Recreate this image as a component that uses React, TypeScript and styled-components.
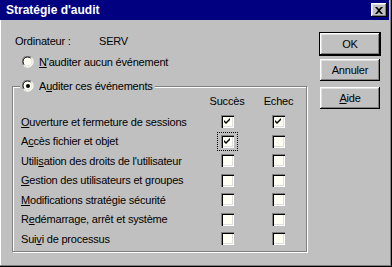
import { FC, Fragment } from "react";
import styled, { createGlobalStyle } from "styled-components";

const GlobalStyle = createGlobalStyle`
  html, body {
    margin: 0;
    padding: 0;
    background: #c0c0c0;
  }
  * {
    box-sizing: border-box;
  }
`;

const Window = styled.div`
  width: 392px;
  height: 267px;
  background-color: #c0c0c0;
  box-shadow: inset -1px -1px 0 #000, inset -2px -2px 0 #808080,
    inset 1px 0 0 #fff;
  font-family: "Liberation Sans", Arial, sans-serif;
  font-size: 11px;
  letter-spacing: -0.2px;
  color: #000;
  overflow: hidden;
`;

const TitleBar = styled.div`
  display: flex;
  align-items: center;
  justify-content: space-between;
  width: 389px;
  height: 20px;
  padding: 0 2px 0 6px;
  background-color: #000080;
  color: #fff;
`;

const Title = styled.span`
  font-weight: bold;
  font-size: 12px;
  letter-spacing: 0;
`;

const CloseButton = styled.div`
  display: flex;
  align-items: center;
  justify-content: center;
  width: 16px;
  height: 14px;
  background-color: #c0c0c0;
  box-shadow: inset -1px -1px 0 #000, inset 1px 1px 0 #fff,
    inset -2px -2px 0 #808080, inset 2px 2px 0 #dfdfdf;
`;

const Body = styled.div`
  display: flex;
`;

const LeftColumn = styled.div`
  display: flex;
  flex-direction: column;
  width: 295px;
  margin-left: 12px;
  padding-top: 13px;
`;

const InfoRow = styled.div`
  display: flex;
  height: 16px;
  line-height: 16px;
  padding-left: 3px;
`;

const InfoLabel = styled.span`
  width: 84px;
`;

const RadioRow = styled.div<{ $top?: number }>`
  display: flex;
  align-items: center;
  gap: 5px;
  height: 16px;
  margin-top: ${(p) => p.$top ?? 0}px;
  padding-left: ${(p) => (p.$top ? 10 : 0)}px;
`;

const Group = styled.div`
  position: relative;
  margin-top: 16px;
  border: 1px solid #808080;
  box-shadow: inset 1px 1px 0 #fff, 1px 1px 0 #fff;
  padding: 4px 1px 2px 8px;
`;

const Legend = styled.div`
  position: absolute;
  top: -9px;
  left: 7px;
  padding: 0 2px;
  background-color: #c0c0c0;
`;

const Grid = styled.div`
  display: grid;
  grid-template-columns: 181px 50px 53px;
  grid-template-rows: 21px repeat(7, 19.5px);
  align-items: center;
`;

const Header = styled.div`
  align-self: start;
  line-height: 20px;
  text-align: center;
`;

const Label = styled.div`
  line-height: 16px;
  white-space: nowrap;
`;

const Cell = styled.div`
  display: flex;
  justify-content: center;
  align-items: center;
`;

const Focus = styled.div<{ $focused?: boolean }>`
  display: flex;
  padding: 2px 3px;
  border: 1px dotted ${(p) => (p.$focused ? "#000" : "transparent")};
`;

const Box = styled.div`
  width: 13px;
  height: 13px;
  background-color: #fffff4;
  box-shadow: inset 1px 1px 0 #808080, inset 2px 2px 0 #000,
    inset -1px -1px 0 #fff, inset -2px -2px 0 #dfdfdf;
`;

const RightColumn = styled.div`
  display: flex;
  flex-direction: column;
  width: 62px;
  margin-left: 12px;
  padding-top: 12px;
`;

const DefaultFrame = styled.div`
  border: 1px solid #000;
  height: 24px;
`;

const Button = styled.div<{ $top?: number }>`
  display: flex;
  align-items: center;
  justify-content: center;
  width: 60px;
  height: 22px;
  margin: ${(p) => p.$top ?? 0}px 0 0 ${(p) => (p.$top ? 1 : 0)}px;
  background-color: #c0c0c0;
  box-shadow: inset -1px -1px 0 #000, inset 1px 1px 0 #fff,
    inset -2px -2px 0 #808080, inset 2px 2px 0 #dfdfdf;
`;

const Radio: FC<{ checked?: boolean }> = ({ checked }) => (
  <svg width="12" height="12" viewBox="0 0 12 12">
    <circle cx="6" cy="6" r="5" fill="#fffff4" />
    <path d="M1.5 9.5 A5.5 5.5 0 0 1 9.5 1.5" stroke="#808080" fill="none" />
    <path d="M9.5 1.5 A5.5 5.5 0 0 1 1.5 9.5" stroke="#fff" fill="none" />
    <path d="M2.3 8.7 A4.5 4.5 0 0 1 8.7 2.3" stroke="#000" fill="none" />
    <path d="M8.7 2.3 A4.5 4.5 0 0 1 2.3 8.7" stroke="#dfdfdf" fill="none" />
    {checked && <circle cx="6" cy="6" r="2" fill="#000" />}
  </svg>
);

const CheckBox: FC<{ checked?: boolean; focused?: boolean }> = ({
  checked,
  focused,
}) => (
  <Focus $focused={focused}>
    <Box>
      {checked && (
        <svg width="13" height="13" viewBox="0 0 13 13">
          <path d="M3 5 L5 7 L9 3 L9 5 L5 9 L3 7 Z" fill="#000" />
        </svg>
      )}
    </Box>
  </Focus>
);

const rows: { text: string; key: number; ok: boolean; ko: boolean }[] = [
  { text: "Ouverture et fermeture de sessions", key: 0, ok: true, ko: true },
  { text: "Accès fichier et objet", key: 1, ok: true, ko: false },
  { text: "Utilisation des droits de l'utilisateur", key: 5, ok: false, ko: false },
  { text: "Gestion des utilisateurs et groupes", key: 0, ok: false, ko: false },
  { text: "Modifications stratégie sécurité", key: 0, ok: false, ko: false },
  { text: "Redémarrage, arrêt et système", key: 1, ok: false, ko: false },
  { text: "Suivi de processus", key: 3, ok: false, ko: false },
];

const Mnemonic: FC<{ text: string; at: number }> = ({ text, at }) => (
  <>
    {text.slice(0, at)}
    <u>{text[at]}</u>
    {text.slice(at + 1)}
  </>
);

const App: FC = () => {
  return (
    <Window>
      <GlobalStyle />
      <TitleBar>
        <Title>Stratégie d'audit</Title>
        <CloseButton>
          <svg width="8" height="7" viewBox="0 0 8 7">
            <path
              d="M0 0h2l2 2 2-2h2L5 3.5 8 7H6L4 5 2 7H0l3-3.5z"
              fill="#000"
            />
          </svg>
        </CloseButton>
      </TitleBar>
      <Body>
        <LeftColumn>
          <InfoRow>
            <InfoLabel>Ordinateur :</InfoLabel>
            <span>SERV</span>
          </InfoRow>
          <RadioRow $top={5}>
            <Radio />
            <span>
              <Mnemonic text="N'auditer aucun événement" at={0} />
            </span>
          </RadioRow>
          <Group>
            <Legend>
              <RadioRow>
                <Radio checked />
                <span>
                  <Mnemonic text="Auditer ces événements" at={1} />
                </span>
              </RadioRow>
            </Legend>
            <Grid>
              <div />
              <Header>Succès</Header>
              <Header>Echec</Header>
              {rows.map((r, i) => (
                <Fragment key={r.text}>
                  <Label>
                    <Mnemonic text={r.text} at={r.key} />
                  </Label>
                  <Cell>
                    <CheckBox checked={r.ok} focused={i === 1} />
                  </Cell>
                  <Cell>
                    <CheckBox checked={r.ko} />
                  </Cell>
                </Fragment>
              ))}
            </Grid>
          </Group>
        </LeftColumn>
        <RightColumn>
          <DefaultFrame>
            <Button>OK</Button>
          </DefaultFrame>
          <Button $top={3}>Annuler</Button>
          <Button $top={6}>
            <u>A</u>ide
          </Button>
        </RightColumn>
      </Body>
    </Window>
  );
};

export default App;
